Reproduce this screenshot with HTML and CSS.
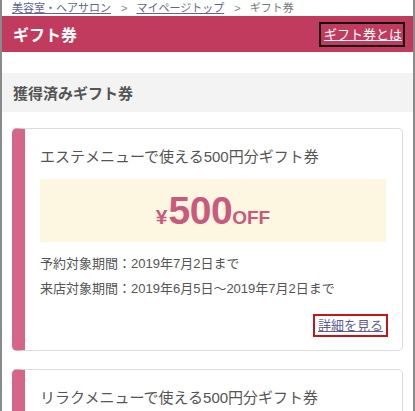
FILE: index.html
```html
<!DOCTYPE html>
<html lang="ja">
<head>
<meta charset="utf-8">
<link rel="stylesheet" href="styles.css">
</head>
<body>
<div class="frame">
  <nav class="crumbs">
    <a href="#">美容室・ヘアサロン</a><span class="sep">&gt;</span><a href="#">マイページトップ</a><span class="sep">&gt;</span><span class="cur">ギフト券</span>
  </nav>
  <header class="bar">
    <h1 class="bar-title">ギフト券</h1>
    <a class="bar-link" href="#">ギフト券とは</a>
  </header>
  <h2 class="section">獲得済みギフト券</h2>
  <div class="list">
    <div class="card">
      <p class="card-title">エステメニューで使える500円分ギフト券</p>
      <div class="amount"><span class="yen">¥</span><span class="num">500</span><span class="off">OFF</span></div>
      <p class="info">予約対象期間：2019年7月2日まで</p>
      <p class="info">来店対象期間：2019年6月5日〜2019年7月2日まで</p>
      <div class="more-row"><a class="more" href="#">詳細を見る</a></div>
    </div>
    <div class="card card-last">
      <p class="card-title">リラクメニューで使える500円分ギフト券</p>
    </div>
  </div>
</div>
</body>
</html>
```
FILE: styles.css
```css
html, body {
  margin: 0;
  padding: 0;
  background: #fff;
}
body {
  font-family: "Liberation Sans", "Noto Sans CJK JP", sans-serif;
  color: #555;
  overflow: hidden;
  height: 411px;
}
.frame {
  width: 411px;
  height: 411px;
  border-left: 2px solid #8a8a8a;
  border-right: 2px solid #8a8a8a;
  overflow: hidden;
}
.crumbs {
  height: 16px;
  display: flex;
  align-items: center;
  padding-left: 10px;
  font-size: 11px;
  line-height: 14px;
  color: #777;
  white-space: nowrap;
}
.crumbs a {
  color: #62628f;
  text-decoration: underline;
}
.sep {
  margin: 0 9px 0 10px;
  color: #888;
}
.bar {
  height: 36px;
  background: #c13b5f;
  display: flex;
  align-items: center;
  justify-content: space-between;
  padding: 0 8px 0 11px;
}
.bar-title {
  margin: 0;
  font-size: 16px;
  font-weight: bold;
  color: #fff;
}
.bar-link {
  color: #fff;
  font-size: 13px;
  line-height: 21px;
  border: 2px solid #111;
  padding: 0 1px 0 3px;
  text-decoration: underline;
}
.section {
  margin: 21px 0 0;
  height: 39px;
  background: #f4f3f3;
  font-size: 15px;
  font-weight: bold;
  color: #555;
  display: flex;
  align-items: center;
  padding-left: 11px;
}
.list {
  padding: 16px 10px 0 10px;
  display: flex;
  flex-direction: column;
  gap: 18px;
}
.card {
  border: 1px solid #dcdcdc;
  border-left: 13px solid #d5668a;
  border-radius: 5px;
  padding: 17px 16px 13px 15px;
}
.card-last {
  padding-bottom: 30px;
}
.card-title {
  margin: 0;
  font-size: 15px;
  line-height: 22px;
  color: #555;
}
.amount {
  margin-top: 11px;
  height: 63px;
  background: #fdf6e1;
  display: flex;
  align-items: baseline;
  justify-content: center;
  color: #c85a7d;
  font-weight: bold;
  line-height: 63px;
}
.yen {
  font-size: 21px;
  margin-right: 1px;
}
.num {
  font-size: 39px;
  letter-spacing: -0.5px;
}
.off {
  font-size: 19px;
}
.info {
  margin: 0;
  font-size: 13px;
  line-height: 25px;
  color: #555;
}
.amount + .info {
  margin-top: 9px;
}
.more-row {
  display: flex;
  justify-content: flex-end;
  margin-top: 13px;
}
.more {
  font-size: 13px;
  line-height: 19px;
  color: #5d5d92;
  text-decoration: underline;
  border: 2px solid #c4141c;
  padding: 0 3px;
  margin-right: -2px;
}
```
